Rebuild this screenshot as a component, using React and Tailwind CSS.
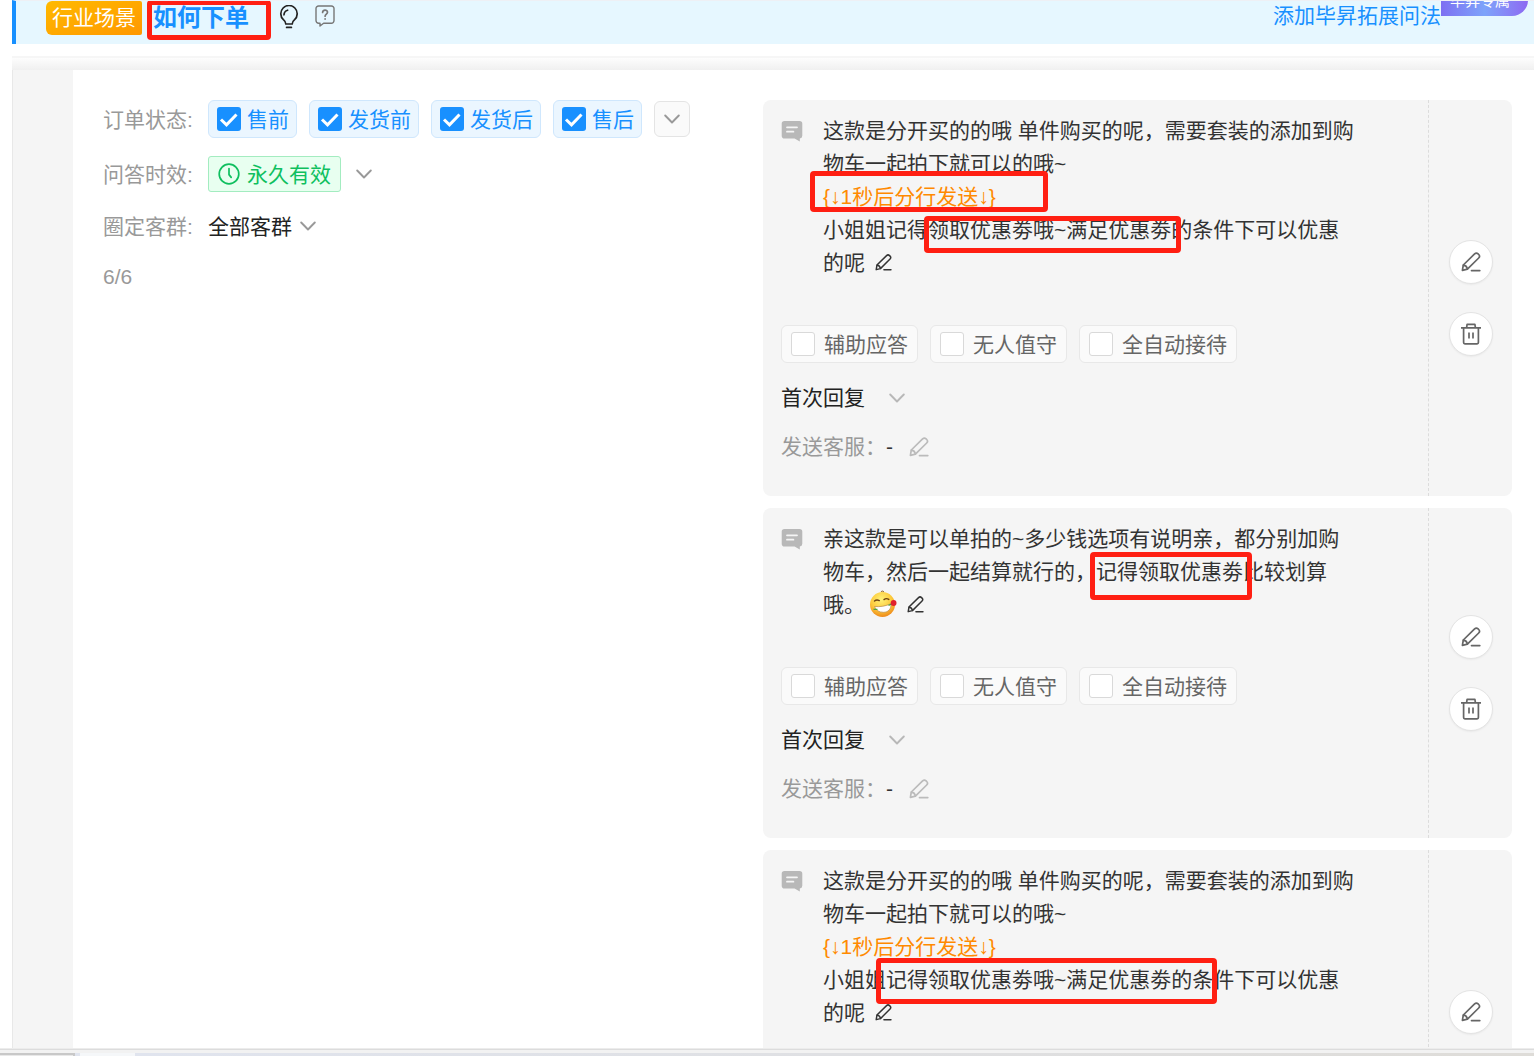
import React from 'react'

const ORDER_STATES = ['售前', '发货前', '发货后', '售后']
const REPLY_MODES = ['辅助应答', '无人值守', '全自动接待']

const ChevronDown = ({ className = 'text-[#999]' }) => (
  <svg viewBox="0 0 16 10" className={`h-[10px] w-4 ${className}`} fill="none" stroke="currentColor" strokeWidth="1.9" strokeLinecap="round" strokeLinejoin="round">
    <path d="M1.2 1.5 8 8.5l6.8-7" />
  </svg>
)

const Pencil = ({ className = '' }) => (
  <svg viewBox="0 0 20 20" className={className} fill="none" stroke="currentColor" strokeWidth="1.7" strokeLinecap="round" strokeLinejoin="round">
    <path d="M1.4 18.4 2.3 13 13.6 1.9a2.5 2.5 0 0 1 3.5 0l.6.6a2.5 2.5 0 0 1 0 3.5L6.4 17.2l-5 1.2Z" />
    <path d="M2.4 13.2c2.2.2 3.6 1.6 4 3.8M10.5 18.6h8.3" />
  </svg>
)

const Trash = () => (
  <svg viewBox="0 0 20 22" className="h-[22px] w-5" fill="none" stroke="currentColor" strokeWidth="1.7" strokeLinejoin="round">
    <path d="M0 4.8h20M5.6 4.6l.5-3.2h7.8l.5 3.2M2.6 4.8v14.8c0 .8.5 1.3 1.3 1.3h12.200c.8 0 1.300-.5 1.300-1.300V4.800M8 9.600v6M12 9.600v6" />
  </svg>
)

const Bulb = () => (
  <svg viewBox="0 0 20 24" className="h-6 w-5" fill="none" stroke="currentColor" strokeWidth="1.7" strokeLinecap="round" strokeLinejoin="round">
    <path d="M6.800 19c0-2-.8-2.900-2.400-4.300a8.200 8.200 0 1 1 11.200 0c-1.600 1.400-2.400 2.300-2.400 4.300Z" />
    <path d="M5 9.800a5 5 0 0 1 3.600-4.600M7.600 22.400h4.800" />
  </svg>
)

const Help = () => (
  <svg viewBox="0 0 20 22" className="h-[22px] w-5" fill="none" stroke="currentColor" strokeWidth="1.4" strokeLinecap="round" strokeLinejoin="round">
    <path d="M3.6 1h12.800A2.600 2.600 0 0 1 19 3.600v12a2.600 2.600 0 0 1-2.600 2.600H8.600L5 21v-2.800H3.600A2.600 2.600 0 0 1 1 15.600v-12A2.600 2.600 0 0 1 3.600 1Z" />
    <path d="M7.600 7.400c0-3.200 4.900-3 4.900-.2 0 1.800-2.400 1.900-2.400 4M10.100 13.800v.3" strokeWidth="1.7" />
  </svg>
)

const Clock = () => (
  <svg viewBox="0 0 22 22" className="size-[22px]" fill="none" stroke="currentColor" strokeWidth="1.7" strokeLinecap="round" strokeLinejoin="round">
    <circle cx="11" cy="11" r="9.8" />
    <path d="M11 5.600v6l2.200 2.800" />
  </svg>
)

const Bubble = () => (
  <svg viewBox="0 0 22 22" className="size-[22px] text-[#b8b8b8]" fill="currentColor">
    <path d="M3.500 1h15A2.800 2.800 0 0 1 21.300 3.800v12a2.800 2.800 0 0 1-2.500 2.700v2.900L13.600 18.600H3.500A2.800 2.800 0 0 1 .7 15.800v-12A2.800 2.800 0 0 1 3.500 1Z" />
    <path d="M6 7.300h10M6 11.700h6.400" stroke="#f5f5f5" strokeWidth="1.8" strokeLinecap="round" />
  </svg>
)

// Grinning face holding a rose in its teeth
const RoseFace = () => (
  <svg viewBox="0 0 28 28" className="ml-1 inline-block size-7 align-[-6px]">
    <defs>
      <radialGradient id="face" cx="45%" cy="30%" r="70%">
        <stop offset="0" stopColor="#fff27a" />
        <stop offset="0.6" stopColor="#fcc93a" />
        <stop offset="1" stopColor="#ee8a1c" />
      </radialGradient>
    </defs>
    <circle cx="13.500" cy="14.500" r="12.500" fill="url(#face)" />
    <path d="M12 2c.6-1.200 2-1.200 3 0" fill="none" stroke="#8a5a12" strokeWidth="1" />
    <path d="M5.500 11c1.500-1.200 3-1.300 4.800-.4M15 9.600c1.500-1.200 3.200-1.200 4.800-.2" fill="none" stroke="#6d4310" strokeWidth="1.400" strokeLinecap="round" />
    <path d="M5.500 16.500c5.500.6 11-.3 16.500-2.800.4 5.500-3 8.600-7.500 8.600s-7.600-2-9-5.800Z" fill="#fff" stroke="#b98a4a" strokeWidth=".7" />
    <path d="M4.500 19.200c1.500.4 2.500.3 4 .2M19.500 15.400c1.200-.4 2.300-1 3.500-1.600" fill="none" stroke="#4fa43c" strokeWidth="1.200" />
    <circle cx="24.600" cy="13" r="2.900" fill="#e0202c" />
  </svg>
)

// Red frame laid over a passage of text
const Frame = ({ className, children }) => (
  <span className="relative">
    {children}
    <span className={`pointer-events-none absolute rounded-[4px] border-[5px] border-[#ff1f12] ${className}`} />
  </span>
)

const StateChip = ({ label }) => (
  <label className="flex h-[38px] items-center gap-[6px] rounded-md border border-[#cfe7fd] bg-[#ebf6ff] pr-[7px] pl-2 text-[#1890ff]">
    <span className="relative flex size-6">
      <input type="checkbox" defaultChecked className="size-6 appearance-none rounded-[3px] bg-[#1890ff]" />
      <svg viewBox="0 0 24 24" className="pointer-events-none absolute inset-0 size-6" fill="none" stroke="#fff" strokeWidth="3">
        <path d="m4 12.500 5.500 5.300L19.500 7.500" />
      </svg>
    </span>
    {label}
  </label>
)

const ModeChip = ({ label }) => (
  <label className="flex h-[38px] items-center gap-[9px] rounded-md border border-[#e8e8e8] bg-[#fafafa] px-[9px] text-[#666]">
    <input type="checkbox" className="size-6 appearance-none rounded-[3px] border border-[#d9d9d9] bg-white" />
    {label}
  </label>
)

const RoundButton = ({ label, children }) => (
  <button aria-label={label} className="flex size-11 items-center justify-center rounded-full border border-[#e4e4e4] bg-white text-[#666] shadow-xs">
    {children}
  </button>
)

const InlineEdit = () => (
  <button aria-label="编辑" className="ml-[10px] inline-flex align-[-1px] text-[#333]">
    <Pencil className="size-[17px]" />
  </button>
)

const AnswerCard = ({ children }) => (
  <article className="flex shrink-0 rounded-lg bg-[#f5f5f5]">
    <div className="min-w-0 flex-1 pt-[14px] pb-[33px] pl-[18px]">
      <div className="flex gap-5">
        <span className="mt-[6px] shrink-0"><Bubble /></span>
        <p className="max-w-[534px] text-[#333]">{children}</p>
      </div>
      <div className="mt-[46px] flex gap-3">
        {REPLY_MODES.map((mode) => <ModeChip key={mode} label={mode} />)}
      </div>
      <button className="mt-[18px] flex items-center gap-6 text-[#222]">
        首次回复
        <ChevronDown className="text-[#b8b8b8]" />
      </button>
      <div className="mt-4 flex items-center text-[#999]">
        发送客服：
        <span className="text-[#333]">-</span>
        <button aria-label="编辑发送客服" className="ml-4 text-[#bbb]">
          <Pencil className="size-5" />
        </button>
      </div>
    </div>
    <div className="flex w-[84px] shrink-0 flex-col items-center justify-center gap-7 border-l border-dashed border-[#dcdcdc]">
      <RoundButton label="编辑"><Pencil className="size-5" /></RoundButton>
      <RoundButton label="删除"><Trash /></RoundButton>
    </div>
  </article>
)

const Header = () => (
  <header className="ml-3 flex h-11 shrink-0 items-start overflow-hidden border-t border-l-4 border-t-[#eef0f5] border-l-[#1890ff] bg-[#e6f7ff]">
    <span className="ml-[30px] h-[34px] rounded-l-md rounded-r-xs bg-linear-to-br from-[#ffb900] to-[#ff9800] px-[6px] text-white">行业场景</span>
    <h1 className="ml-[11px] text-2xl leading-[33px] font-bold text-[#1890ff]">
      <Frame className="-top-1 -right-[22px] -bottom-[9px] -left-[6px]">如何下单</Frame>
    </h1>
    <button aria-label="提示" className="mt-1 ml-[30px] text-[#222]"><Bulb /></button>
    <button aria-label="帮助" className="mt-1 ml-4 text-[#777]"><Help /></button>
    <a href="#expand" className="ml-auto leading-[30px] text-[#1890ff]">添加毕昇拓展问法</a>
    <span className="-mt-4 mr-[6px] h-[31px] w-[87px] rounded-br-2xl bg-linear-to-r from-[#7d6ff2] via-[#7da3fa] to-[#8c68f2] pl-[9px] text-[15px] leading-[31px] text-white">毕昇专属</span>
  </header>
)

const Filters = () => (
  <section className="flex flex-col gap-[18px] pt-[30px] pl-[30px] text-[#999]">
    <div className="flex items-center">
      <span className="w-[105px]">订单状态:</span>
      <div className="flex items-center gap-3">
        {ORDER_STATES.map((state) => <StateChip key={state} label={state} />)}
        <button aria-label="更多状态" className="flex size-9 items-center justify-center rounded-md border border-[#e4e4e4] bg-[#fafafa]">
          <ChevronDown />
        </button>
      </div>
    </div>
    <div className="flex items-center">
      <span className="w-[105px]">问答时效:</span>
      <button className="flex items-center gap-[15px]">
        <span className="flex h-9 items-center gap-[7px] rounded-[3px] border border-[#a3ecc0] bg-[#e8fff0] px-[9px] text-[#0fbf5f]">
          <Clock />
          永久有效
        </span>
        <ChevronDown />
      </button>
    </div>
    <div className="flex h-8 items-center">
      <span className="w-[105px]">圈定客群:</span>
      <button className="flex items-center gap-2 text-[#222]">
        全部客群
        <ChevronDown />
      </button>
    </div>
    <div>6/6</div>
  </section>
)

export default function App() {
  return (
    <div className="flex h-screen flex-col overflow-hidden bg-white font-['Liberation_Sans','Noto_Sans_CJK_SC',sans-serif] text-[21px] leading-[33px]">
      <Header />
      <div className="mt-3 ml-3 h-[14px] shrink-0 border-t-2 border-[#f6f6f6] bg-linear-to-b from-[#fdfdfd] to-[#f0f0f0]" />
      <main className="ml-3 flex min-h-0 flex-1 overflow-hidden">
        <aside className="w-[61px] shrink-0 border-l border-[#e8e8e8] bg-[#f5f5f5]" />
        <div className="grid flex-1 grid-cols-[690fr_771fr]">
          <Filters />
          <section className="flex flex-col gap-3 pt-[30px] pr-[22px]">
            <AnswerCard>
              这款是分开买的的哦 单件购买的呢，需要套装的添加到购物车一起拍下就可以的哦~
              <br />
              <span className="text-[#ff8a00]">
                <Frame className="-top-[14px] -right-[52px] -bottom-1 -left-[13px]">{'{↓1秒后分行发送↓}'}</Frame>
              </span>
              <br />
              小姐姐记得
              <Frame className="-top-[2px] -right-[10px] -bottom-3 -left-1">领取优惠劵哦~满足优惠劵</Frame>
              的条件下可以优惠的呢
              <InlineEdit />
            </AnswerCard>
            <AnswerCard>
              亲这款是可以单拍的~多少钱选项有说明亲，都分别加购物车，然后一起结算就行的，
              <Frame className="-top-2 -right-[9px] -bottom-[17px] -left-[6px]">记得领取优惠劵</Frame>
              比较划算哦。
              <RoseFace />
              <InlineEdit />
            </AnswerCard>
            <AnswerCard>
              这款是分开买的的哦 单件购买的呢，需要套装的添加到购物车一起拍下就可以的哦~
              <br />
              <span className="text-[#ff8a00]">{'{↓1秒后分行发送↓}'}</span>
              <br />
              小姐姐
              <Frame className="-top-[10px] -right-1 -bottom-[13px] -left-[10px]">记得领取优惠劵哦~满足优惠劵的条</Frame>
              件下可以优惠的呢
              <InlineEdit />
            </AnswerCard>
          </section>
        </div>
      </main>
      <footer className="flex h-2 shrink-0 flex-col border-t border-[#ececec]">
        <div className="h-1 border-t border-[#dcdcdc] bg-[#f2f2f2]" />
        <div className="flex flex-1">
          <div className="w-[75px] border-t-2 border-r-2 border-[#c8c8c8] bg-[#e8e8e8]" />
          <div className="w-[5px] bg-[#e0e4ee]" />
          <div className="w-[55px] bg-[#f5f7f9]" />
          <div className="flex-1 bg-linear-to-r from-[#e0e4ee] to-[#dedcd8]" />
        </div>
      </footer>
    </div>
  )
}
